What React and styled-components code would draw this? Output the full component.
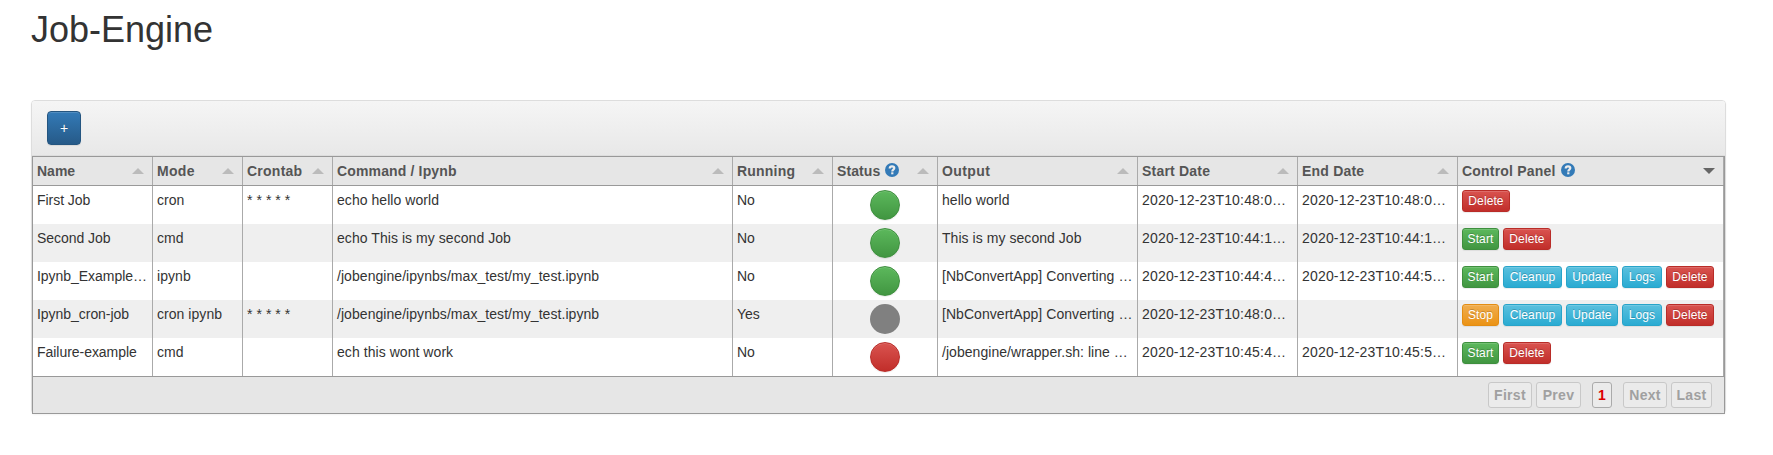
import React from "react";
import styled, { createGlobalStyle } from "styled-components";

const Global = createGlobalStyle`
  * { box-sizing: border-box; }
  body {
    margin: 0;
    background: #fff;
    color: #333;
    font-family: "Liberation Sans", Arial, sans-serif;
    font-size: 14px;
    line-height: 20px;
  }
`;

const Page = styled.main`
  width: 1773px;
  height: 455px;
  padding: 10px 47px 0 31px;
`;

const Title = styled.h1`
  margin: 0 0 50px;
  height: 40px;
  font-size: 36px;
  font-weight: 400;
  line-height: 40px;
`;

const Panel = styled.section`
  height: 314px;
  border: 1px solid #ddd;
  border-radius: 4px;
  box-shadow: 0 1px 2px rgba(0, 0, 0, 0.05);
`;

const Toolbar = styled.header`
  height: 55px;
  padding: 10px 15px;
  background: linear-gradient(#f5f5f5, #e8e8e8);
  border-bottom: 1px solid #ddd;
  border-radius: 3px 3px 0 0;
`;

const AddButton = styled.button`
  display: block;
  width: 34px;
  height: 34px;
  padding: 0;
  border: 1px solid #245580;
  border-radius: 4px;
  background: linear-gradient(#337ab7, #265a88);
  box-shadow: inset 0 1px 0 rgba(255, 255, 255, 0.15), 0 1px 1px rgba(0, 0, 0, 0.075);
  color: #fff;
  font: 14px/20px "Liberation Sans", Arial, sans-serif;
  text-shadow: 0 -1px 0 rgba(0, 0, 0, 0.2);
`;

const Grid = styled.div`
  height: 258px;
  border: 1px solid #999;
  background: #fff;
`;

const columns = "120px 90px 90px 400px 100px 105px 200px 160px 160px 266px";

const HeadRow = styled.div`
  display: grid;
  grid-template-columns: ${columns};
  height: 29px;
  border-bottom: 1px solid #999;
  background: #e6e6e6;
`;

const HeadCell = styled.div`
  display: flex;
  align-items: center;
  justify-content: space-between;
  padding: 0 8px 0 4px;
  border-right: 1px solid #aaa;
  color: #555;
  font-weight: 700;
  white-space: nowrap;
`;

const HeadTitle = styled.span`
  display: flex;
  align-items: center;
  gap: 5px;
  line-height: 20px;
  letter-spacing: ${(p) => p.$track || 0}px;
`;

const Arrow = styled.span`
  width: 0;
  height: 0;
  border-left: 6px solid transparent;
  border-right: 6px solid transparent;
  ${(p) => (p.$down ? "border-top: 6px solid #666;" : "border-bottom: 6px solid #bbb;")}
`;

const HelpMark = styled.svg`
  width: 14px;
  height: 14px;
  margin-top: -2px;
`;

const Row = styled.div`
  display: grid;
  grid-template-columns: ${columns};
  height: 38px;
  background: ${(p) => (p.$even ? "#efefef" : "#fff")};
`;

const Cell = styled.div`
  padding: 4px;
  border-right: 1px solid #aaa;
  white-space: nowrap;
  letter-spacing: ${(p) => p.$track || 0}px;
`;

const tones = {
  green: ["#5cb85c", "#419641", "#3e8f3e"],
  red: ["#d9534f", "#c12e2a", "#b92c28"],
  blue: ["#5bc0de", "#2aabd2", "#28a4c9"],
  orange: ["#f0ad4e", "#eb9316", "#e38d13"],
};

const Light = styled.div`
  width: 30px;
  height: 30px;
  margin: 0 auto;
  border-radius: 50%;
  ${(p) =>
    p.$tone === "gray"
      ? "background: #808080;"
      : `background: linear-gradient(${tones[p.$tone][0]}, ${tones[p.$tone][1]});
         border: 1px solid ${tones[p.$tone][2]};
         box-shadow: inset 0 1px 0 rgba(255,255,255,.15), 0 1px 1px rgba(0,0,0,.075);`}
`;

const Actions = styled.div`
  display: flex;
  gap: 4px;
  padding: 4px;
  border-right: 1px solid #aaa;
`;

const ActionButton = styled.button`
  width: ${(p) => p.$width}px;
  height: 22px;
  padding: 0;
  border: 1px solid ${(p) => tones[p.$tone][2]};
  border-radius: 3px;
  background: linear-gradient(${(p) => tones[p.$tone][0]}, ${(p) => tones[p.$tone][1]});
  box-shadow: inset 0 1px 0 rgba(255, 255, 255, 0.15), 0 1px 1px rgba(0, 0, 0, 0.075);
  color: #fff;
  font: 12px/18px "Liberation Sans", Arial, sans-serif;
  letter-spacing: 0.1px;
  text-shadow: 0 -1px 0 rgba(0, 0, 0, 0.2);
`;

const Footer = styled.footer`
  display: flex;
  justify-content: flex-end;
  height: 37px;
  padding: 5px 12px 5px 0;
  border-top: 1px solid #999;
  background: #e6e6e6;
`;

const PageButton = styled.button`
  width: ${(p) => p.$width}px;
  height: 26px;
  margin-left: ${(p) => p.$gap || 4}px;
  padding: 0;
  border: 1px solid ${(p) => (p.$active ? "#aaa" : "#c8c8c8")};
  border-radius: 3px;
  background: #ebebeb;
  color: ${(p) => (p.$active ? "#d00" : "#a0a0a0")};
  font: 700 14px/20px "Liberation Sans", Arial, sans-serif;
  letter-spacing: ${(p) => (p.$active ? 0 : 0.3)}px;
`;

const heads = [
  ["Name", 0], ["Mode", 0.3], ["Crontab", 0.25], ["Command / Ipynb", 0.15], ["Running", 0.2],
  ["Status", 0.1, true], ["Output", 0.4], ["Start Date", 0.2], ["End Date", 0.2], ["Control Panel", 0.2, true],
];

const start = ["Start", 37, "green"];
const stop = ["Stop", 37, "orange"];
const del = ["Delete", 48, "red"];
const tools = [["Cleanup", 59, "blue"], ["Update", 52, "blue"], ["Logs", 40, "blue"]];

const jobs = [
  { cells: ["First Job", "cron", "* * * * *", "echo hello world", "No"], light: "green",
    out: ["hello world", "2020-12-23T10:48:0…", "2020-12-23T10:48:0…"], actions: [del] },
  { cells: ["Second Job", "cmd", "", "echo This is my second Job", "No"], light: "green",
    out: ["This is my second Job", "2020-12-23T10:44:1…", "2020-12-23T10:44:1…"], actions: [start, del] },
  { cells: ["Ipynb_Example…", "ipynb", "", "/jobengine/ipynbs/max_test/my_test.ipynb", "No"], light: "green",
    out: ["[NbConvertApp] Converting …", "2020-12-23T10:44:4…", "2020-12-23T10:44:5…"], actions: [start, ...tools, del] },
  { cells: ["Ipynb_cron-job", "cron ipynb", "* * * * *", "/jobengine/ipynbs/max_test/my_test.ipynb", "Yes"], light: "gray",
    out: ["[NbConvertApp] Converting …", "2020-12-23T10:48:0…", ""], actions: [stop, ...tools, del] },
  { cells: ["Failure-example", "cmd", "", "ech this wont work", "No"], light: "red",
    out: ["/jobengine/wrapper.sh: line …", "2020-12-23T10:45:4…", "2020-12-23T10:45:5…"], actions: [start, del] },
];

const cellTrack = [-0.04, 0.05, 0.05, 0.055, 0];

function Help() {
  return (
    <HelpMark viewBox="0 0 14 14">
      <circle cx="7" cy="7" r="7" fill="#337ab7" />
      <path d="M4.7 5.5C4.8 3.9 5.6 3.3 7 3.3c1.4 0 2.3.7 2.3 1.8 0 1.6-2 1.5-2 3.3" fill="none" stroke="#ececec" strokeWidth="2.2" />
      <path d="M6.2 9.3h2.2v2H6.2z" fill="#ececec" />
    </HelpMark>
  );
}

export default function App() {
  return (
    <Page>
      <Global />
      <Title>Job-Engine</Title>
      <Panel>
        <Toolbar><AddButton>+</AddButton></Toolbar>
        <Grid>
          <HeadRow>
            {heads.map(([label, track, help], i) => (
              <HeadCell key={label}>
                <HeadTitle $track={track}>{label}{help && <Help />}</HeadTitle>
                <Arrow $down={i === heads.length - 1} />
              </HeadCell>
            ))}
          </HeadRow>
          {jobs.map((job, r) => (
            <Row key={job.cells[0]} $even={r % 2 === 1}>
              {job.cells.map((text, i) => <Cell key={i} $track={cellTrack[i]}>{text}</Cell>)}
              <Cell><Light $tone={job.light} /></Cell>
              {job.out.map((text, i) => <Cell key={i} $track={i ? 0.18 : 0.05}>{text}</Cell>)}
              <Actions>
                {job.actions.map(([label, width, tone]) => (
                  <ActionButton key={label} $width={width} $tone={tone}>{label}</ActionButton>
                ))}
              </Actions>
            </Row>
          ))}
          <Footer>
            <PageButton $width={44}>First</PageButton>
            <PageButton $width={45}>Prev</PageButton>
            <PageButton $width={20} $gap={11} $active>1</PageButton>
            <PageButton $width={44} $gap={11}>Next</PageButton>
            <PageButton $width={41}>Last</PageButton>
          </Footer>
        </Grid>
      </Panel>
    </Page>
  );
}
